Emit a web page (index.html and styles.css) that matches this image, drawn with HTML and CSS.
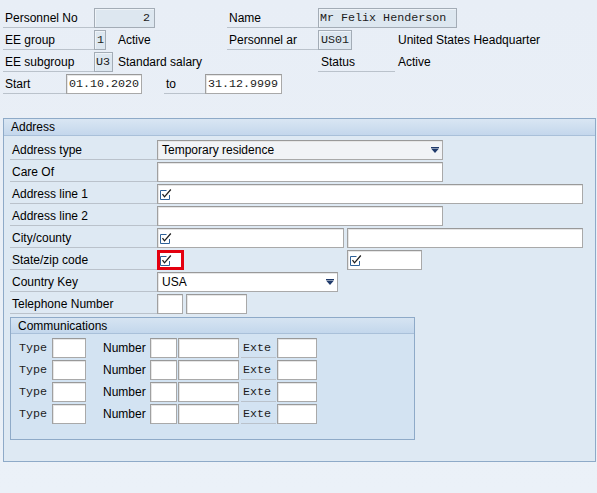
FILE: index.html
```html
<!DOCTYPE html>
<html>
<head>
<meta charset="utf-8">
<link rel="stylesheet" href="styles.css">
</head>
<body>
<div class="screen">
  <div class="head">
    <div class="row">
      <span class="lbl w-lbl">Personnel No</span>
      <span class="fld ro mono right w-pno">2</span>
      <span class="lbl w-lbl gap-name">Name</span>
      <span class="fld ro mono w-name">Mr Felix Henderson</span>
    </div>
    <div class="row">
      <span class="lbl w-lbl">EE group</span>
      <span class="fld ro mono w-grp">1</span>
      <span class="txt w-grptxt">Active</span>
      <span class="lbl w-lbl">Personnel ar</span>
      <span class="fld ro mono w-area">US01</span>
      <span class="txt pad-far">United States Headquarter</span>
    </div>
    <div class="row">
      <span class="lbl w-lbl">EE subgroup</span>
      <span class="fld ro mono w-sub">U3</span>
      <span class="txt w-subtxt">Standard salary</span>
      <span class="lbl w-status">Status</span>
      <span class="txt pad-status">Active</span>
    </div>
    <div class="row">
      <span class="lbl w-start">Start</span>
      <span class="fld mono w-date">01.10.2020</span>
      <span class="lbl w-to gap-to">to</span>
      <span class="fld mono w-date2">31.12.9999</span>
    </div>
  </div>

  <section class="group addr">
    <div class="ghead">Address</div>
    <div class="gbody addr-body">
      <div class="row">
        <span class="lbl w-alb">Address type</span>
        <span class="fld drop gray w-long">Temporary residence<svg class="arrow" width="8" height="6" viewBox="0 0 8 6"><path d="M0 0h8v1H0zM0 1.5h8L4 6z" fill="#1f3a6b"/></svg></span>
      </div>
      <div class="row">
        <span class="lbl w-alb">Care Of</span>
        <span class="fld w-long"></span>
      </div>
      <div class="row">
        <span class="lbl w-alb">Address line 1</span>
        <span class="fld icon w-full"><svg class="chk" width="12" height="12" viewBox="0 0 12 12"><path d="M6.5 2.5H0.5V11.5H9.5V7" fill="none" stroke="#2e6199"/><path d="M2.5 6.2l2 2.6L10.8 1.5" fill="none" stroke="#1e1e1e" stroke-width="1.3"/></svg></span>
      </div>
      <div class="row">
        <span class="lbl w-alb">Address line 2</span>
        <span class="fld w-long"></span>
      </div>
      <div class="row">
        <span class="lbl w-alb">City/county</span>
        <span class="fld icon w-city"><svg class="chk" width="12" height="12" viewBox="0 0 12 12"><path d="M6.5 2.5H0.5V11.5H9.5V7" fill="none" stroke="#2e6199"/><path d="M2.5 6.2l2 2.6L10.8 1.5" fill="none" stroke="#1e1e1e" stroke-width="1.3"/></svg></span>
        <span class="fld w-county gap-3"></span>
      </div>
      <div class="row">
        <span class="lbl w-alb">State/zip code</span>
        <span class="fld icon err w-state"><svg class="chk" width="12" height="12" viewBox="0 0 12 12"><path d="M6.5 2.5H0.5V11.5H9.5V7" fill="none" stroke="#2e6199"/><path d="M2.5 6.2l2 2.6L10.8 1.5" fill="none" stroke="#1e1e1e" stroke-width="1.3"/></svg></span>
        <span class="fld icon w-zip gap-zip"><svg class="chk" width="12" height="12" viewBox="0 0 12 12"><path d="M6.5 2.5H0.5V11.5H9.5V7" fill="none" stroke="#2e6199"/><path d="M2.5 6.2l2 2.6L10.8 1.5" fill="none" stroke="#1e1e1e" stroke-width="1.3"/></svg></span>
      </div>
      <div class="row">
        <span class="lbl w-alb">Country Key</span>
        <span class="fld drop w-ctry">USA<svg class="arrow" width="8" height="6" viewBox="0 0 8 6"><path d="M0 0h8v1H0zM0 1.5h8L4 6z" fill="#1f3a6b"/></svg></span>
      </div>
      <div class="row">
        <span class="lbl w-alb">Telephone Number</span>
        <span class="fld w-tel1"></span>
        <span class="fld w-tel2 gap-tel"></span>
      </div>

      <section class="group comm">
        <div class="ghead chead">Communications</div>
        <div class="gbody comm-body">
          <div class="row">
            <span class="plain mono w-type">Type</span>
            <span class="fld w-tfld"></span>
            <span class="plain w-num gap-num">Number</span>
            <span class="fld w-n1"></span>
            <span class="fld w-n2 gap-1"></span>
            <span class="lbl mono w-ext gap-2">Exte</span>
            <span class="fld w-efld gap-1"></span>
          </div>
          <div class="row">
            <span class="plain mono w-type">Type</span>
            <span class="fld w-tfld"></span>
            <span class="plain w-num gap-num">Number</span>
            <span class="fld w-n1"></span>
            <span class="fld w-n2 gap-1"></span>
            <span class="lbl mono w-ext gap-2">Exte</span>
            <span class="fld w-efld gap-1"></span>
          </div>
          <div class="row">
            <span class="plain mono w-type">Type</span>
            <span class="fld w-tfld"></span>
            <span class="plain w-num gap-num">Number</span>
            <span class="fld w-n1"></span>
            <span class="fld w-n2 gap-1"></span>
            <span class="lbl mono w-ext gap-2">Exte</span>
            <span class="fld w-efld gap-1"></span>
          </div>
          <div class="row">
            <span class="plain mono w-type">Type</span>
            <span class="fld w-tfld"></span>
            <span class="plain w-num gap-num">Number</span>
            <span class="fld w-n1"></span>
            <span class="fld w-n2 gap-1"></span>
            <span class="lbl mono w-ext gap-2">Exte</span>
            <span class="fld w-efld gap-1"></span>
          </div>
        </div>
      </section>
    </div>
  </section>
</div>
</body>
</html>
```

FILE: styles.css
```css
* { box-sizing: border-box; }

html, body {
  margin: 0;
  padding: 0;
}

body {
  font-family: "Liberation Sans", Arial, sans-serif;
  font-size: 12px;
  color: #000;
  background: #e9eff7;
}

.screen {
  width: 597px;
  height: 493px;
  padding: 8px 2px 0 3px;
  background: linear-gradient(#e8eef6, #ebf1f8);
  overflow: hidden;
}

.head {
  display: flex;
  flex-direction: column;
}

.row {
  display: flex;
  height: 20px;
  margin-bottom: 2px;
}

.lbl {
  padding-top: 1px;
  line-height: 18px;
  border-bottom: 1px solid #bac2cb;
  padding-left: 2px;
  white-space: nowrap;
  overflow: hidden;
  flex: none;
}

.plain {
  padding-top: 1px;
  line-height: 19px;
  padding-left: 2px;
  white-space: nowrap;
  flex: none;
}

.txt {
  padding-top: 1px;
  line-height: 19px;
  white-space: nowrap;
  flex: none;
}

.fld {
  flex: none;
  height: 20px;
  border: 1px solid #a9a9a9;
  border-top-color: #999;
  border-left-color: #a0a0a0;
  background: #fff;
  box-shadow: inset 1px 1px 0 #e6e6e6;
  padding-top: 1px;
  line-height: 17px;
  padding-left: 2px;
  white-space: nowrap;
  overflow: hidden;
}

.ro {
  background: #dde7f0;
  border-color: #a3acb6;
  box-shadow: inset 1px 1px 0 #eef3f8;
}

.mono {
  font-family: "Liberation Mono", "Courier New", monospace;
  font-size: 11.7px;
  color: #1c1c1c;
}

.right {
  text-align: right;
  padding-right: 4px;
}

.icon {
  display: flex;
  align-items: center;
  padding-top: 0;
  padding-left: 2px;
}

.chk { display: block; }

.err {
  border: 3px solid #e4000f;
  padding-left: 0;
  box-shadow: none;
}

.drop {
  display: flex;
  align-items: center;
  padding-top: 1px;
  padding-left: 4px;
}

.drop .arrow {
  margin-left: auto;
  margin-right: 3px;
  margin-top: -1px;
  display: block;
}

.gray { background: #f1f3f6; }

/* header block widths */
.w-lbl { width: 91px; }
.w-pno { width: 61px; }
.gap-name { margin-left: 72px; }
.w-name { width: 139px; padding-left: 1px; }
.w-grp { width: 12px; padding-left: 2px; }
.w-grptxt { width: 121px; padding-left: 12px; }
.w-area { width: 34px; padding-left: 2px; }
.pad-far { padding-left: 46px; }
.w-sub { width: 19px; padding-left: 1px; }
.w-subtxt { width: 205px; padding-left: 5px; }
.w-status { width: 77px; padding-left: 3px; }
.pad-status { padding-left: 3px; }
.w-start { width: 63px; }
.w-date { width: 76px; padding-left: 2px; }
.gap-to { margin-left: 22px; }
.w-to { width: 41px; }
.w-date2 { width: 77px; padding-left: 2px; }

/* group boxes */
.group {
  border: 1px solid #8eaac8;
}

.ghead {
  height: 17px;
  padding-top: 1px;
  line-height: 15px;
  padding-left: 7px;
  border-bottom: 1px solid #a9c0d9;
  background: linear-gradient(#d9e6f3, #c4d7ec);
  white-space: nowrap;
}

.addr {
  margin-top: 22px;
  width: 593px;
  height: 344px;
  background: #dee9f3;
}

.addr-body {
  display: flex;
  flex-direction: column;
  padding: 4px 0 0 6px;
}

.w-alb { width: 147px; }
.w-long { width: 286px; }
.w-full { width: 426px; }
.w-city { width: 187px; }
.w-county { width: 236px; }
.gap-3 { margin-left: 3px; }
.w-state { width: 27px; }
.gap-zip { margin-left: 163px; }
.w-zip { width: 75px; }
.w-ctry { width: 181px; }
.w-tel1 { width: 26px; }
.gap-tel { margin-left: 3px; }
.w-tel2 { width: 61px; }

.comm {
  margin-top: 1px;
  width: 405px;
  height: 123px;
  background: #d3e3f2;
}

.chead {
  height: 16px;
  padding-top: 1px;
  line-height: 14px;
  padding-left: 7px;
  background: linear-gradient(#d6e4f2, #c3d7ec);
}

.comm-body {
  padding: 4px 0 0 6px;
}

.w-type { width: 35px; }
.w-tfld { width: 34px; }
.gap-num { margin-left: 15px; }
.w-num { width: 49px; }
.w-n1 { width: 27px; }
.w-n2 { width: 61px; }
.gap-1 { margin-left: 1px; }
.gap-2 { margin-left: 2px; }
.w-ext { width: 35px; }
.w-efld { width: 40px; }
```
